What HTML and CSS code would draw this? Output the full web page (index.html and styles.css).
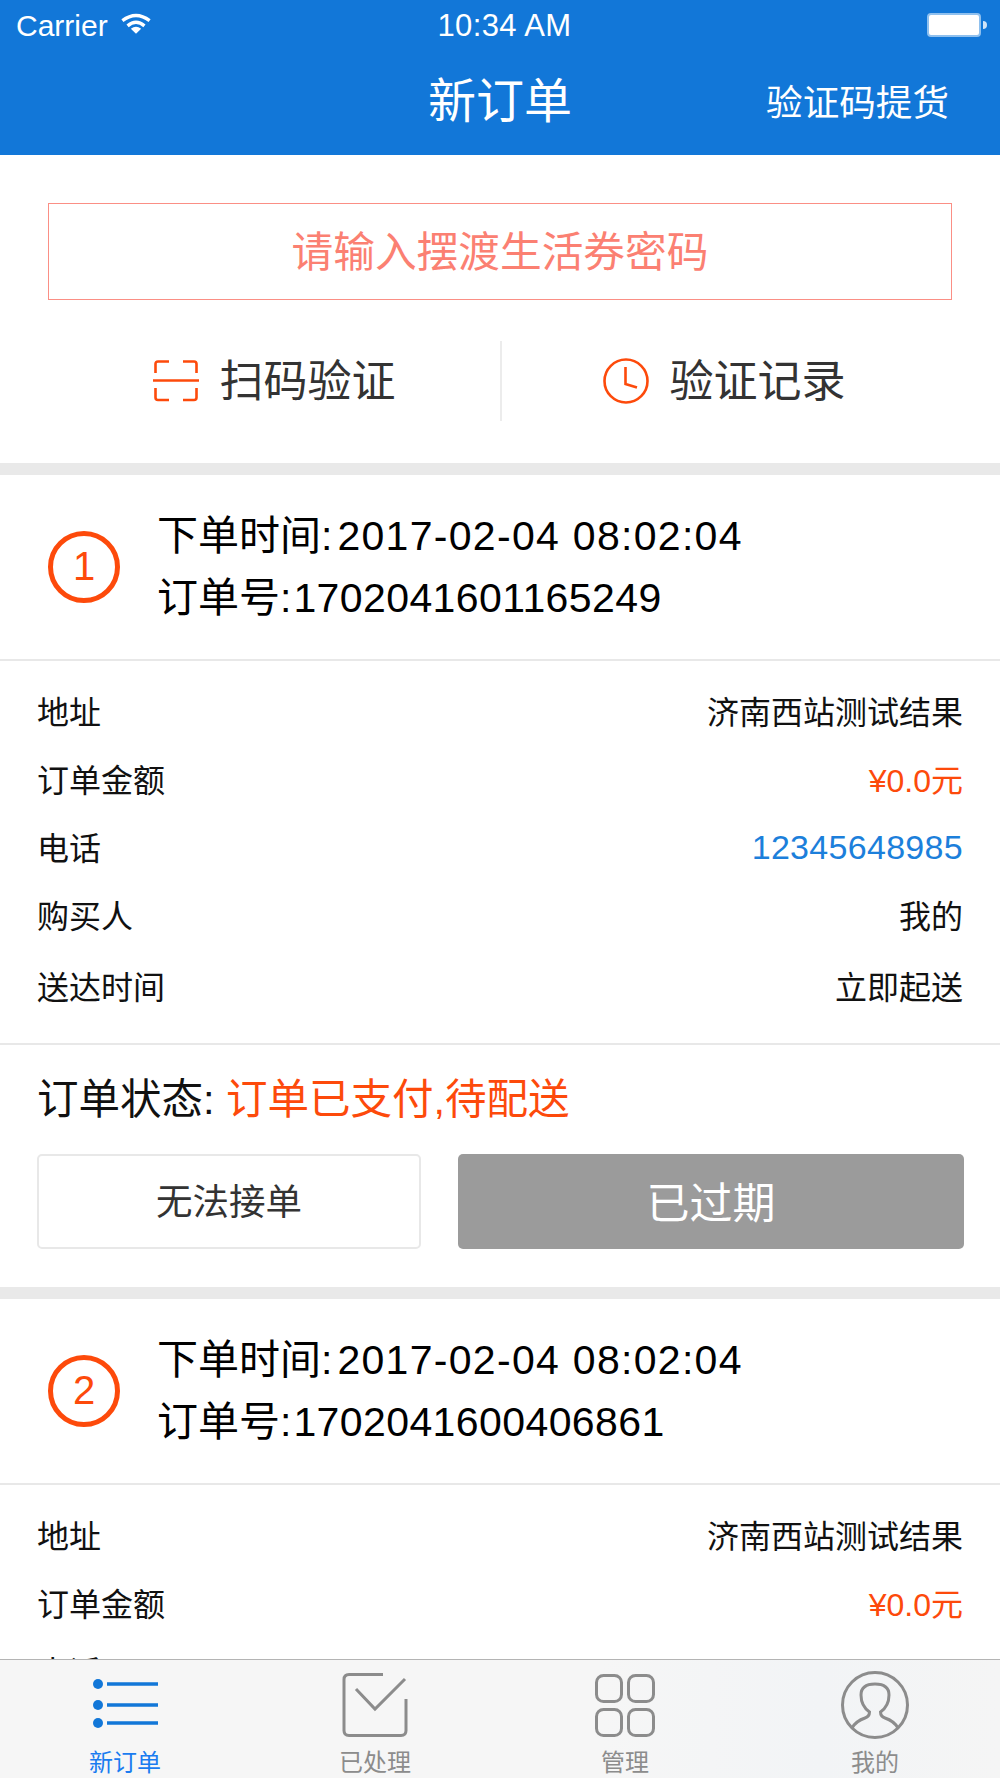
FILE: index.html
```html
<!DOCTYPE HTML>
<html>

<head>
    <title>新订单</title>
    <meta name="viewport" content="width=device-width, initial-scale=1">
    <link rel="stylesheet" href="styles.css">
</head>

<body>
    <div class="page">
        <div class="topnav">
            <div class="statusbar">
                <div class="carrier">Carrier
                    <svg class="wifi" width="30" height="22" viewBox="0 0 32 22">
                        <path d="M1.5 7.5 Q16 -3.5 30.5 7.5" fill="none" stroke="#fff" stroke-width="3.6" />
                        <path d="M7 13 Q16 5.5 25 13" fill="none" stroke="#fff" stroke-width="3.6" />
                        <path d="M10.5 16 Q16 12 21.5 16 L16 21.5 Z" fill="#fff" />
                    </svg>
                </div>
                <div class="clock-text">10:34 AM</div>
                <div class="battery"><span class="battery-body"></span><span class="battery-nub"></span></div>
            </div>
            <div class="titlebar">
                <h1>新订单</h1>
                <a class="pickup">验证码提货</a>
            </div>
        </div>

        <div class="content">
            <div class="verify">
                <div class="code-input">请输入摆渡生活券密码</div>
                <div class="quick">
                    <div class="quick-item quick-left">
                        <svg width="46" height="42" viewBox="0 0 46 42" fill="none" stroke="#fd4a0b" stroke-width="2.6">
                            <path d="M16 1.5 H5 Q2.5 1.5 2.5 4 V13" />
                            <path d="M30 1.5 H41 Q43.5 1.5 43.5 4 V13" />
                            <path d="M0 20.5 H46" />
                            <path d="M2.5 28 V37.5 Q2.5 40 5 40 H16" />
                            <path d="M43.5 28 V37.5 Q43.5 40 41 40 H30" />
                        </svg>
                        <span>扫码验证</span>
                    </div>
                    <div class="quick-item quick-right">
                        <svg width="46" height="46" viewBox="0 0 46 46" fill="none" stroke="#fd4a0b" stroke-width="2.6">
                            <circle cx="23" cy="23" r="21.5" />
                            <path d="M22.5 9 V26 L34 29.5" />
                        </svg>
                        <span>验证记录</span>
                    </div>
                </div>
            </div>

            <div class="order">
                <div class="order-head">
                    <div class="order-num">1</div>
                    <div class="order-info">
                        <p>下单时间:<span class="order-date">2017-02-04 08:02:04</span></p>
                        <p>订单号:<span class="order-no">1702041601165249</span></p>
                    </div>
                </div>
                <div class="order-rows">
                    <div class="row"><span>地址</span><span>济南西站测试结果</span></div>
                    <div class="row"><span>订单金额</span><span class="price">¥0.0元</span></div>
                    <div class="row"><span>电话</span><span class="phone">12345648985</span></div>
                    <div class="row"><span>购买人</span><span>我的</span></div>
                    <div class="row row-last"><span>送达时间</span><span>立即起送</span></div>
                </div>
                <div class="order-foot">
                    <div class="state">订单状态: <span class="state-value">订单已支付,待配送</span></div>
                    <div class="actions">
                        <div class="button button-reject">无法接单</div>
                        <div class="button button-expired">已过期</div>
                    </div>
                </div>
            </div>

            <div class="order">
                <div class="order-head">
                    <div class="order-num">2</div>
                    <div class="order-info">
                        <p>下单时间:<span class="order-date">2017-02-04 08:02:04</span></p>
                        <p>订单号:<span class="order-no">1702041600406861</span></p>
                    </div>
                </div>
                <div class="order-rows">
                    <div class="row"><span>地址</span><span>济南西站测试结果</span></div>
                    <div class="row"><span>订单金额</span><span class="price">¥0.0元</span></div>
                    <div class="row"><span>电话</span><span class="phone">12345648985</span></div>
                </div>
            </div>
        </div>

        <div class="tabbar">
            <div class="tab tab-active">
                <svg width="80" height="70" viewBox="0 0 80 70">
                    <circle cx="13" cy="13" r="5" fill="#1277d8" />
                    <circle cx="13" cy="34" r="5" fill="#1277d8" />
                    <circle cx="13" cy="52" r="5" fill="#1277d8" />
                    <path d="M22 13 H73 M22 34 H73 M22 52 H73" stroke="#1277d8" stroke-width="3.5" />
                </svg>
                <span>新订单</span>
            </div>
            <div class="tab">
                <svg width="80" height="70" viewBox="0 0 80 70" fill="none" stroke="#8c8c8c" stroke-width="3">
                    <path d="M48 3.5 H14 Q9 3.5 9 8.5 V59.5 Q9 64.5 14 64.5 H66 Q71 64.5 71 59.5 V28" />
                    <path d="M21 18 L40 38 L70 8" />
                </svg>
                <span>已处理</span>
            </div>
            <div class="tab">
                <svg width="80" height="70" viewBox="0 0 80 70" fill="none" stroke="#8c8c8c" stroke-width="3">
                    <rect x="11.5" y="4.5" width="25" height="26" rx="7" />
                    <rect x="43.5" y="4.5" width="25" height="26" rx="7" />
                    <rect x="11.5" y="38.5" width="25" height="26" rx="7" />
                    <rect x="43.5" y="38.5" width="25" height="26" rx="7" />
                </svg>
                <span>管理</span>
            </div>
            <div class="tab">
                <svg width="80" height="70" viewBox="0 0 80 70" fill="none" stroke="#8c8c8c" stroke-width="3">
                    <circle cx="40" cy="34" r="32.5" />
                    <path d="M17 57 Q21 50 30 47 Q34.500 45.500 34.500 41 Q26 35 26 24 Q26 13 40 13 Q54 13 54 24 Q54 35 45.500 41 Q45.500 45.500 50 47 Q59 50 63 57" />
                </svg>
                <span>我的</span>
            </div>
        </div>
    </div>
</body>

</html>
```

FILE: styles.css
```css
html {
    font-family: "Liberation Sans", "Noto Sans CJK SC", sans-serif;
}

body {
    margin: 0;
}

.page {
    height: 1778px;
    display: flex;
    flex-direction: column;
    overflow: hidden;
}

.topnav {
    height: 155px;
    flex: none;
    background-color: #1277d8;
    color: #fff;
}

.statusbar {
    height: 50px;
    padding: 0 13px 0 16px;
    display: grid;
    grid-template-columns: 1fr auto 1fr;
    align-items: center;
}

.carrier {
    font-size: 30px;
    padding-top: 1px;
    display: flex;
    align-items: center;
    gap: 13px;
}

.wifi {
    margin-top: -3px;
}

.clock-text {
    font-size: 31px;
    letter-spacing: .4px;
    padding-top: 1px;
    margin-left: 6px;
}

.battery {
    display: flex;
    justify-content: flex-end;
    align-items: center;
}

.battery-body {
    width: 50px;
    height: 20px;
    background-color: #fff;
    border: 2px solid #8fc0ee;
    border-radius: 4px;
}

.battery-nub {
    width: 4px;
    height: 8px;
    margin-left: 2px;
    background-color: #cfe3f7;
    border-radius: 0 4px 4px 0;
}

.titlebar {
    height: 105px;
    display: flex;
    align-items: center;
    justify-content: center;
    position: relative;
}

h1 {
    margin: -11px 0 0;
    font-size: 48px;
    font-weight: normal;
}

.pickup {
    position: absolute;
    right: 51px;
    top: 24px;
    font-size: 36.6px;
}

.content {
    flex: 1;
    min-height: 0;
    overflow: hidden;
}

.verify {
    padding-top: 48px;
    height: 260px;
    box-sizing: content-box;
}

.code-input {
    margin: 0 48px;
    height: 95px;
    line-height: 97px;
    border: 1px solid #fb8f85;
    text-align: center;
    font-size: 41.7px;
    color: #fb8072;
}

.quick {
    margin-top: 41px;
    height: 80px;
    display: flex;
}

.quick-item {
    width: 50%;
    box-sizing: border-box;
    display: flex;
    align-items: center;
    justify-content: center;
    gap: 21px;
    font-size: 44px;
    color: #333;
}

.quick-item span {
    margin-top: -6px;
}

.quick-left {
    padding-left: 48px;
}

.quick-right {
    border-left: 2px solid #ececec;
    padding-right: 54px;
}

.order {
    border-top: 12px solid #e9e9e9;
}

.order-head {
    height: 184px;
    display: flex;
    align-items: center;
    padding-left: 48px;
    border-bottom: 2px solid #e8e8e8;
}

.order-num {
    width: 72px;
    height: 72px;
    box-sizing: border-box;
    border: 5px solid #fd4a0b;
    border-radius: 50%;
    text-align: center;
    line-height: 60px;
    font-size: 40px;
    color: #fd4a0b;
}

.order-info {
    margin-left: 37px;
    font-size: 41px;
    line-height: 62px;
    color: #000;
}

.order-info p {
    margin: 0;
}

.order-date {
    margin-left: 5px;
    letter-spacing: 1.3px;
}

.order-no {
    margin-left: 2px;
    letter-spacing: .4px;
}

.order-rows {
    padding: 15px 37px 24px;
    border-bottom: 2px solid #e8e8e8;
}

.row {
    height: 68px;
    display: flex;
    align-items: center;
    justify-content: space-between;
    font-size: 32px;
    color: #111;
}

.row-last {
    margin-top: 3px;
}

.price {
    color: #fd4a0b;
}

.phone {
    font-size: 34px;
    letter-spacing: .3px;
    padding-top: 2px;
    color: #1c7fdb;
}

.order-foot {
    padding: 0 36px 38px 37px;
}

.state {
    height: 109px;
    line-height: 109px;
    font-size: 41.5px;
    color: #111;
}

.state-value {
    color: #fd4a0b;
}

.actions {
    display: flex;
    gap: 37px;
}

.button {
    height: 95px;
    box-sizing: border-box;
    display: flex;
    align-items: center;
    justify-content: center;
    padding-bottom: 4px;
    border-radius: 5px;
}

.button-reject {
    width: 384px;
    border: 2px solid #e8e8e8;
    font-size: 36.5px;
    color: #333;
}

.button-expired {
    flex: 1;
    background-color: #9b9b9b;
    font-size: 43px;
    color: #fff;
}

.tabbar {
    height: 118px;
    flex: none;
    display: grid;
    grid-template-columns: repeat(4, 1fr);
    border-top: 1px solid #b4b4b4;
    background: linear-gradient(90deg, #f6f6f6 0%, #f6f6f6 60%, #f2f4f6 82%, #f5f5f5 100%);
}

.tab {
    display: flex;
    flex-direction: column;
    align-items: center;
    padding-top: 11px;
    font-size: 24px;
    line-height: 28px;
    color: #8c8c8c;
}

.tab svg {
    margin-bottom: 8px;
}

.tab-active {
    color: #1a7cf0;
}
```
